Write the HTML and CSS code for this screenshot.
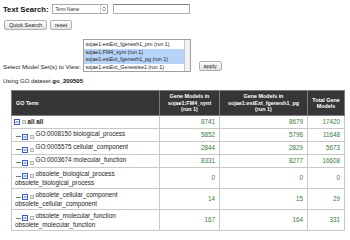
FILE: index.html
```html
<!DOCTYPE html>
<html>
<head>
<meta charset="utf-8">
<link rel="stylesheet" href="styles.css">
</head>
<body>
<div class="row search">
  <span class="label-big">Text Search:</span>
  <div class="select"><span>Term Name</span><span class="arrow"><svg width="4" height="6" viewBox="0 0 4 6"><path d="M0.5 3.5 L2 5 L3.5 3.5" fill="none" stroke="#555" stroke-width="0.7"/><path d="M0.5 2.5 L2 1 L3.5 2.5" fill="none" stroke="#555" stroke-width="0.7"/></svg></span></div>
  <div class="textinput"></div>
</div>
<div class="row buttons">
  <button class="btn">Quick Search</button>
  <button class="btn">reset</button>
</div>
<div class="row models">
  <span class="label">Select Model Set(s) to View:</span>
  <div class="listbox">
    <div class="opts">
      <div class="opt">sojae1:estExt_fgenesh1_pm (run 1)</div>
      <div class="opt sel">sojae1:FM4_synt (run 1)</div>
      <div class="opt sel">sojae1:estExt_fgenesh1_pg (run 1)</div>
      <div class="opt">sojae1:estExt_Genewise1 (run 1)</div>
    </div>
    <div class="scroll"></div>
  </div>
  <button class="btn apply">apply</button>
</div>
<p class="dataset">Using GO dataset <b>go_200505</b></p>
<table class="go">
  <colgroup><col class="c1"><col class="c2"><col class="c3"><col class="c4"></colgroup>
  <thead>
    <tr>
      <th class="term">GO Term</th>
      <th>Gene Models in<br>sojae1:FM4_synt<br>(run 1)</th>
      <th>Gene Models in<br>sojae1:estExt_fgenesh1_pg<br>(run 1)</th>
      <th>Total Gene<br>Models</th>
    </tr>
  </thead>
  <tbody>
    <tr class="single">
      <td><span class="tree root"><svg class="mbox" width="6" height="6" viewBox="0 0 6 6"><rect x="0.5" y="0.5" width="5" height="5" fill="#fff" stroke="#3a5cc8"/><line x1="1.5" y1="3" x2="4.5" y2="3" stroke="#3a5cc8"/></svg><svg class="ico" width="4" height="4" viewBox="0 0 4 4"><rect x="0.3" y="0.3" width="3.4" height="3.4" fill="#e8e8e8" stroke="#999" stroke-width="0.6"/></svg></span><b>all all</b></td>
      <td class="num">8741</td><td class="num">8679</td><td class="num">17420</td>
    </tr>
    <tr class="single">
      <td><span class="tree"><span class="dash"></span><svg class="mbox" width="6" height="6" viewBox="0 0 6 6"><rect x="0.5" y="0.5" width="5" height="5" fill="#fff" stroke="#3a5cc8"/><line x1="1.5" y1="3" x2="4.5" y2="3" stroke="#3a5cc8"/></svg><svg class="ico" width="4" height="4" viewBox="0 0 4 4"><rect x="0.3" y="0.3" width="3.4" height="3.4" fill="#e8e8e8" stroke="#999" stroke-width="0.6"/></svg></span>GO:0008150 biological_process</td>
      <td class="num">5852</td><td class="num">5796</td><td class="num">11648</td>
    </tr>
    <tr class="single">
      <td><span class="tree"><span class="dash"></span><svg class="mbox" width="6" height="6" viewBox="0 0 6 6"><rect x="0.5" y="0.5" width="5" height="5" fill="#fff" stroke="#3a5cc8"/><line x1="1.5" y1="3" x2="4.5" y2="3" stroke="#3a5cc8"/></svg><svg class="ico" width="4" height="4" viewBox="0 0 4 4"><rect x="0.3" y="0.3" width="3.4" height="3.4" fill="#e8e8e8" stroke="#999" stroke-width="0.6"/></svg></span>GO:0005575 cellular_component</td>
      <td class="num">2844</td><td class="num">2829</td><td class="num">5673</td>
    </tr>
    <tr class="single">
      <td><span class="tree"><span class="dash"></span><svg class="mbox" width="6" height="6" viewBox="0 0 6 6"><rect x="0.5" y="0.5" width="5" height="5" fill="#fff" stroke="#3a5cc8"/><line x1="1.5" y1="3" x2="4.5" y2="3" stroke="#3a5cc8"/></svg><svg class="ico" width="4" height="4" viewBox="0 0 4 4"><rect x="0.3" y="0.3" width="3.4" height="3.4" fill="#e8e8e8" stroke="#999" stroke-width="0.6"/></svg></span>GO:0003674 molecular_function</td>
      <td class="num">8331</td><td class="num">8277</td><td class="num">16608</td>
    </tr>
    <tr class="double">
      <td><span class="tree"><span class="dash"></span><svg class="mbox" width="6" height="6" viewBox="0 0 6 6"><rect x="0.5" y="0.5" width="5" height="5" fill="#fff" stroke="#3a5cc8"/><line x1="1.5" y1="3" x2="4.5" y2="3" stroke="#3a5cc8"/></svg><svg class="ico" width="4" height="4" viewBox="0 0 4 4"><rect x="0.3" y="0.3" width="3.4" height="3.4" fill="#e8e8e8" stroke="#999" stroke-width="0.6"/></svg></span>obsolete_biological_process<br>obsolete_biological_process</td>
      <td class="num">0</td><td class="num">0</td><td class="num">0</td>
    </tr>
    <tr class="double">
      <td><span class="tree"><span class="dash"></span><svg class="mbox" width="6" height="6" viewBox="0 0 6 6"><rect x="0.5" y="0.5" width="5" height="5" fill="#fff" stroke="#3a5cc8"/><line x1="1.5" y1="3" x2="4.5" y2="3" stroke="#3a5cc8"/></svg><svg class="ico" width="4" height="4" viewBox="0 0 4 4"><rect x="0.3" y="0.3" width="3.4" height="3.4" fill="#e8e8e8" stroke="#999" stroke-width="0.6"/></svg></span>obsolete_cellular_component<br>obsolete_cellular_component</td>
      <td class="num">14</td><td class="num">15</td><td class="num">29</td>
    </tr>
    <tr class="double">
      <td><span class="tree"><span class="dash"></span><svg class="mbox" width="6" height="6" viewBox="0 0 6 6"><rect x="0.5" y="0.5" width="5" height="5" fill="#fff" stroke="#3a5cc8"/><line x1="1.5" y1="3" x2="4.5" y2="3" stroke="#3a5cc8"/></svg><svg class="ico" width="4" height="4" viewBox="0 0 4 4"><rect x="0.3" y="0.3" width="3.4" height="3.4" fill="#e8e8e8" stroke="#999" stroke-width="0.6"/></svg></span>obsolete_molecular_function<br>obsolete_molecular_function</td>
      <td class="num">167</td><td class="num">164</td><td class="num">331</td>
    </tr>
  </tbody>
</table>
</body>
</html>
```

FILE: styles.css
```css
* { box-sizing: border-box; }
html, body { margin: 0; background: #fff; }
body {
  width: 350px;
  height: 240px;
  overflow: hidden;
  padding: 4px 4px 0 3px;
  font-family: "Liberation Sans", Arial, sans-serif;
  font-size: 6px;
  color: #222;
}
.row { display: flex; align-items: center; }
.search { gap: 3px; }
.label-big { font-weight: bold; font-size: 7.7px; color: #111; }
.select {
  width: 56px;
  height: 10px;
  border: 1px solid #a8a8a8;
  background: #fff;
  display: flex;
  align-items: center;
  justify-content: space-between;
  padding-left: 3px;
  font-size: 4.6px;
  color: #333;
}
.arrow {
  width: 7px;
  height: 8px;
  border-left: 1px solid #d0d0d0;
  display: flex;
  align-items: center;
  justify-content: center;
}
.textinput {
  width: 77px;
  height: 10px;
  margin-left: 2px;
  border: 1px solid #b0b0b0;
  border-top-color: #808080;
  background: #fff;
}
.buttons { margin-top: 6px; gap: 3px; padding-left: 1px; }
.btn {
  font-family: inherit;
  font-size: 5.5px;
  height: 10px;
  padding: 0 4px;
  margin: 0;
  border: 1px solid #b0b0b0;
  border-radius: 2px;
  background: linear-gradient(#ffffff, #e2e2e2);
  color: #222;
  line-height: 8px;
}
.models { margin-top: 9px; align-items: flex-end; }
.label { font-size: 6.2px; color: #222; line-height: 7px; margin-bottom: 2px; }
.listbox {
  margin-left: 2px;
  width: 108px;
  height: 33px;
  border: 1px solid #a0a0a0;
  display: flex;
  background: #fff;
}
.opts { flex: 1; padding-top: 1px; }
.opt {
  font-size: 5.3px;
  line-height: 7.5px;
  height: 7.5px;
  padding-left: 2px;
  color: #222;
  white-space: nowrap;
}
.opt.sel { background: #b7d4f8; }
.scroll {
  width: 6px;
  border-left: 1px solid #c8c8c8;
  background: #f2f2f2;
}
.apply { margin-left: 8px; margin-bottom: 1px; }
.dataset { margin: 6px 0 0 0; font-size: 6px; line-height: 7px; color: #222; }
.dataset b { color: #111; }
.go {
  margin: 5px 0 0 8px;
  width: 333px;
  border-collapse: collapse;
  table-layout: fixed;
  font-size: 6.3px;
}
.c1 { width: 148px; }
.c2 { width: 60px; }
.c3 { width: 88px; }
.c4 { width: 37px; }
.go th {
  background: #363636;
  color: #fff;
  font-weight: bold;
  font-size: 5.4px;
  line-height: 6.4px;
  border: 1px solid #7c7c7c;
  padding: 2px 1px;
  height: 25px;
  text-align: center;
}
.go th.term { text-align: left; padding-left: 4px; }
.go td {
  border: 1px solid #c8c8c8;
  padding: 0 4px 0 3px;
  line-height: 7.3px;
  color: #222;
  white-space: nowrap;
  overflow: hidden;
}
.go tr.single { height: 13px; }
.go tr.double { height: 21px; }
.go td.num { text-align: right; color: #3b7a3b; }
.tree { display: inline-flex; align-items: center; gap: 1px; margin-right: 2px; vertical-align: -1px; }
.tree.root { margin-left: -1px; }
.dash { width: 5px; height: 1px; background: #777; margin-left: 1px; }
.mbox { display: block; }
.ico { display: block; margin-left: 0.5px; }
```
